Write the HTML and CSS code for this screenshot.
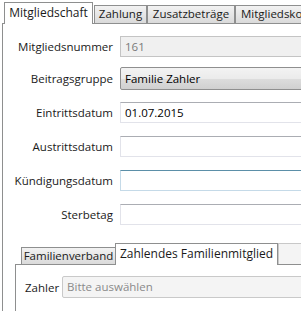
FILE: index.html
```html
<!DOCTYPE html>
<html lang="de">
<head>
    <meta charset="UTF-8">
    <title>Mitgliedschaft</title>
    <link rel="stylesheet" href="styles.css">
</head>
<body>
    <!-- Haupt-Reiter -->
    <div class="tabs">
        <div class="tab active t-mitglied">Mitgliedschaft</div>
        <div class="tab t-zahlung">Zahlung</div>
        <div class="tab t-zusatz">Zusatzbeträge</div>
        <div class="tab t-konto">Mitgliedskonto</div>
    </div>

    <div class="pane">
        <div class="form">
            <div class="row first"><label>Mitgliedsnummer</label><div class="field disabled">161</div></div>
            <div class="row"><label>Beitragsgruppe</label><div class="combo">Familie Zahler</div></div>
            <div class="row"><label>Eintrittsdatum</label><div class="field">01.07.2015</div></div>
            <div class="row"><label>Austrittsdatum</label><div class="field"></div></div>
            <div class="row"><label>Kündigungsdatum</label><div class="field focus"></div></div>
            <div class="row"><label>Sterbetag</label><div class="field"></div></div>
        </div>

        <!-- Familie -->
        <div class="subtabs">
            <div class="tab t-verband">Familienverband</div>
            <div class="tab active t-zahlend">Zahlendes Familienmitglied</div>
            <div class="tab t-leer"></div>
        </div>
        <div class="subpane">
            <div class="zahler-row">
                <label>Zahler</label>
                <div class="combo disabled">Bitte auswählen</div>
            </div>
        </div>
    </div>
</body>
</html>
```

FILE: styles.css
```css
* { box-sizing: border-box; }
html, body { margin: 0; }
body {
    width: 301px;
    height: 311px;
    overflow: hidden;
    background: #fff;
    font-family: "Open Sans", "Noto Sans", sans-serif;
    font-size: 11.5px;
    color: #1a1a1a;
}

/* Reiter */
.tabs, .subtabs { display: flex; align-items: flex-end; white-space: nowrap; }
.tabs { height: 23px; padding-left: 4px; }
.tab {
    flex: none;
    height: 18px;
    line-height: 16px;
    text-align: center;
    border: 1px solid #8e8f8f;
    border-bottom: none;
    background: linear-gradient(#f2f2f2, #e6e6e6 50%, #dadada);
    overflow: hidden;
}
.tab.active {
    height: 22px;
    line-height: 19px;
    margin-bottom: -1px;
    background: #fff;
    position: relative;
    z-index: 1;
    font-size: 12px;
}
.t-mitglied { width: 89px; }
.t-zahlung { width: 53px; margin-left: 1px; }
.t-zusatz { width: 88px; }
.t-konto { width: 90px; text-align: left; padding-left: 5px; }

.pane {
    margin-left: 2px;
    width: 340px;
    height: 300px;
    border: 1px solid #8e8f8f;
}

/* Formular */
.form { padding-top: 7px; }
.row { display: flex; align-items: center; height: 34px; }
.row.first { height: 30px; }
.row label { width: 111px; text-align: right; padding-right: 1px; }
.field, .combo {
    margin-left: 6px;
    flex: 1;
    height: 21px;
    line-height: 19px;
    padding-left: 4px;
    color: #000;
}
.field {
    border: 1px solid #e2e3ea;
    border-top-color: #abadb3;
    background: #fff;
}
.field.disabled {
    background: #f0f0f0;
    border-color: #c4c4c4;
    color: #7a7a7a;
}
.field.focus {
    border-color: #c5dae8;
    border-top-color: #5b8fa8;
}
.combo {
    height: 23px;
    line-height: 21px;
    border: 1px solid #8f8f8f;
    border-radius: 2px;
    background: linear-gradient(#f3f3f3, #ebebeb 50%, #dddddd 51%, #d0d0d0);
}
.combo.disabled {
    background: #f4f4f4;
    border-color: #c9c9c9;
    color: #8a8a8a;
}

/* Unter-Reiter */
.subtabs { height: 21px; margin-top: 12px; margin-left: 12px; padding-left: 6px; }
.t-verband { height: 17px; line-height: 15px; width: 95px; }
.subtabs .tab.active { height: 22px; margin-left: -1px; width: 163px; }
.t-leer { width: 40px; height: 21px; background: #f4f4f4; border-color: #c8c8c8; }

.subpane {
    margin-left: 12px;
    height: 60px;
    border: 1px solid #8e8f8f;
    border-right: none;
    background: #fff;
}
.zahler-row { display: flex; align-items: center; padding: 11px 0 0 9px; }
.zahler-row .combo { margin-left: 3px; height: 22px; line-height: 20px; }
```
